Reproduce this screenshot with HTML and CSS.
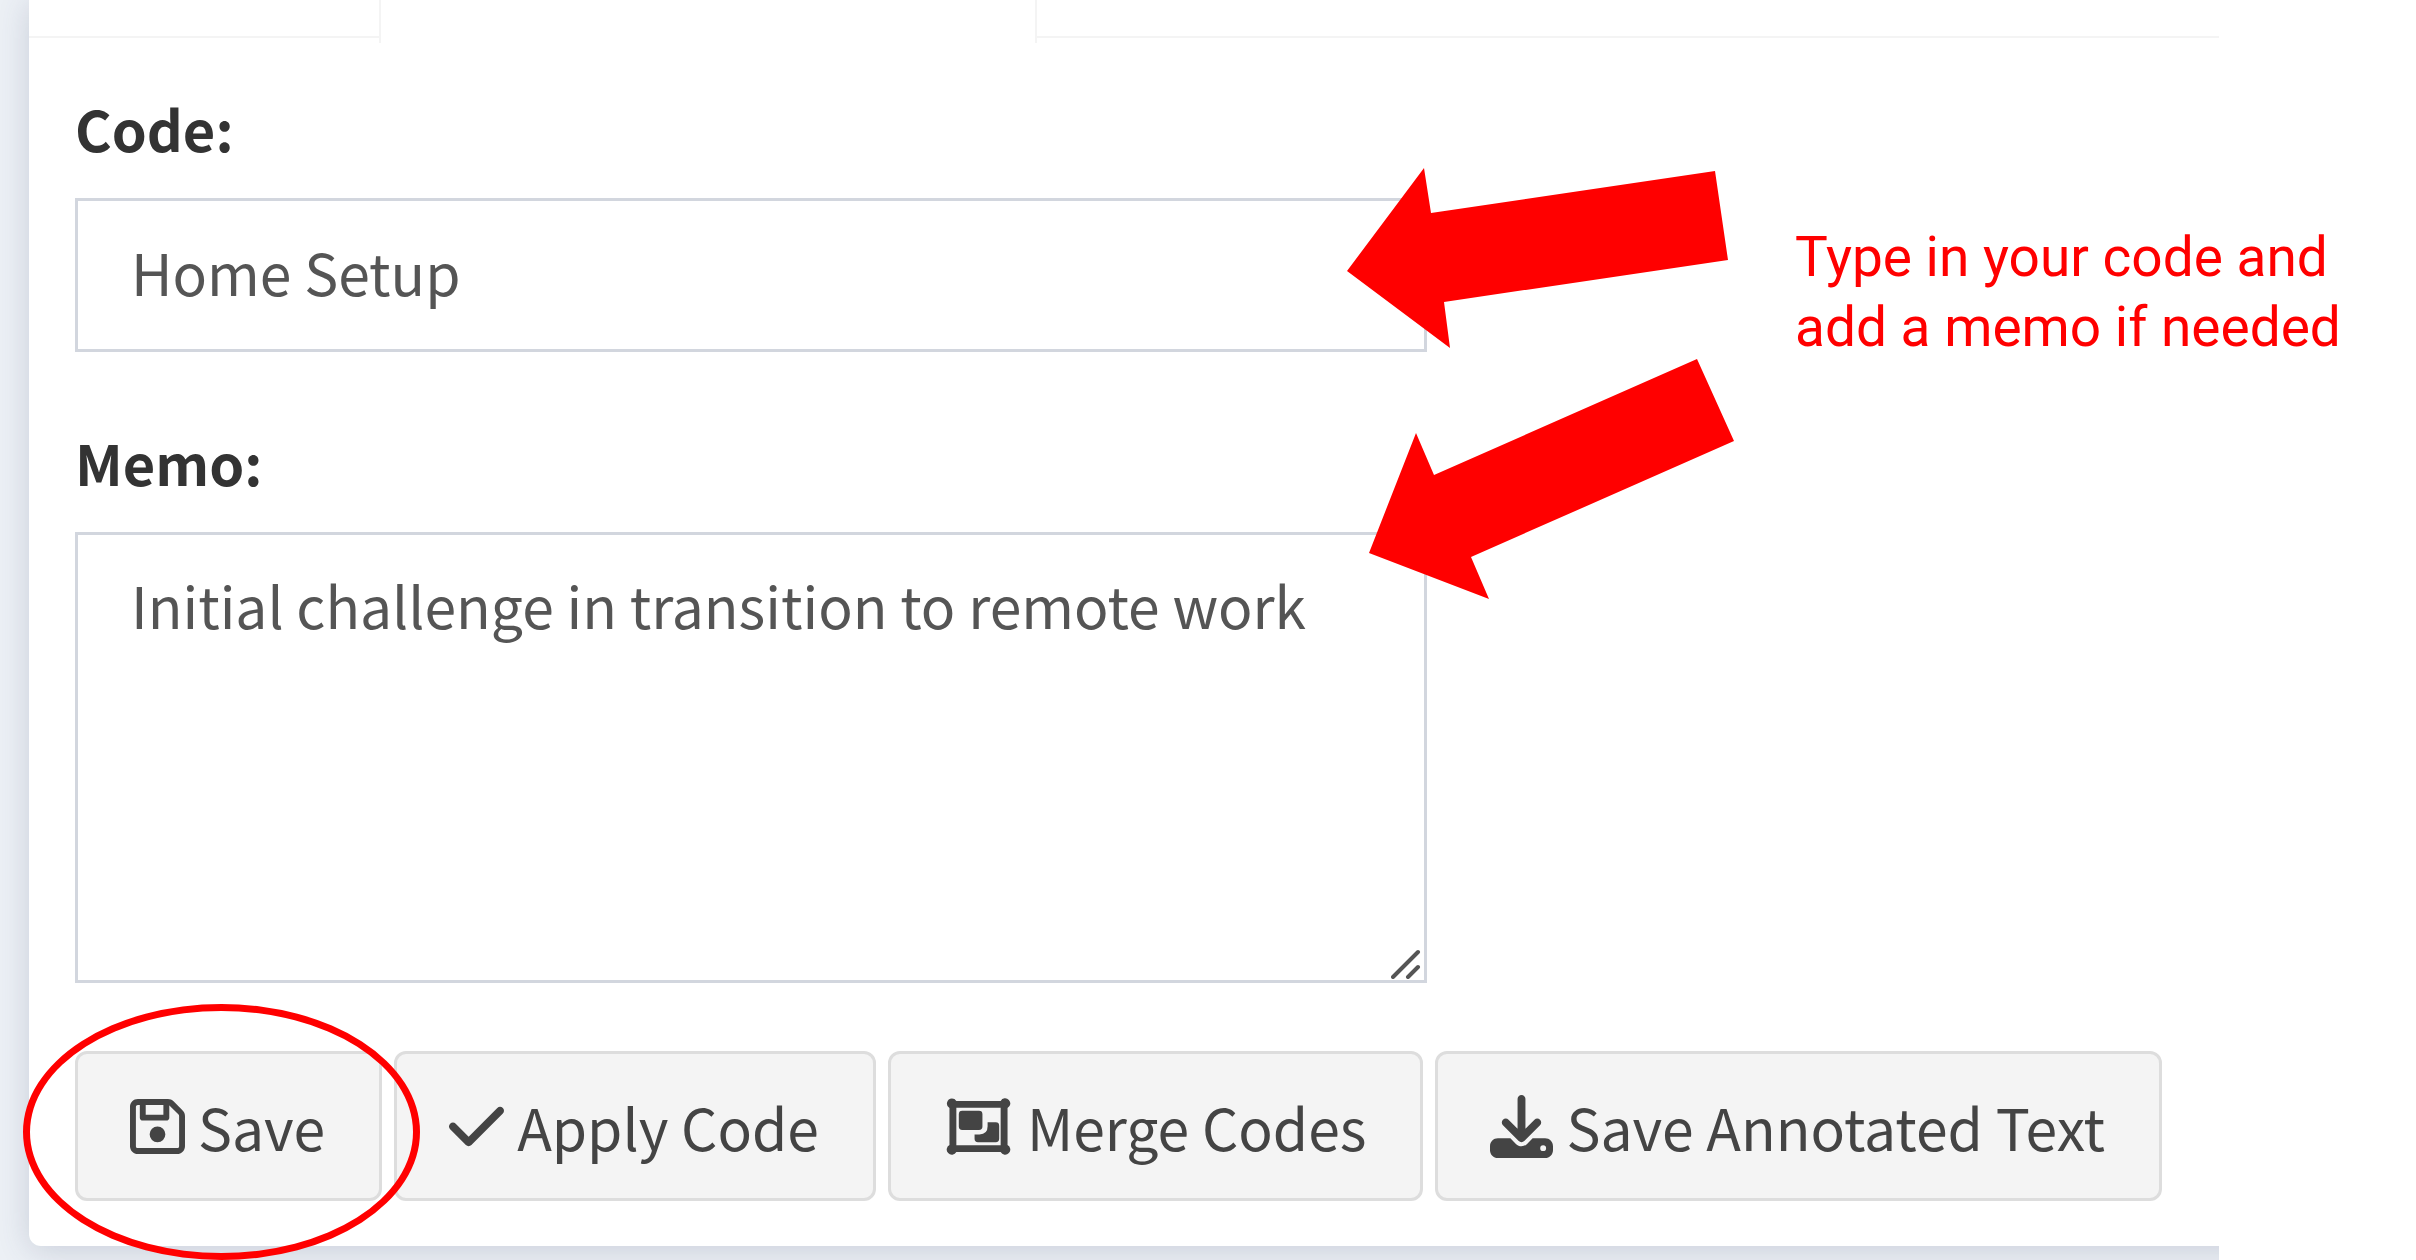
FILE: index.html
```html
<!DOCTYPE html>
<html lang="en">
<head>
<meta charset="utf-8">
<title>Code editor</title>
<link rel="stylesheet" href="styles.css">
</head>
<body>
<main class="app">
  <section class="card">
    <nav class="tabs" aria-label="Sections">
      <span class="tab"></span>
      <span class="tab tab-active"></span>
      <span class="tab"></span>
    </nav>
    <form class="form">
      <div class="fields">
        <div class="field">
          <label class="label" for="code">Code:</label>
          <input class="control" id="code" type="text" value="Home Setup">
        </div>
        <div class="field">
          <label class="label" for="memo">Memo:</label>
          <div class="memo">
            <textarea class="control control-area" id="memo" spellcheck="false">Initial challenge in transition to remote work</textarea>
            <svg class="grip" viewBox="0 0 30 30" aria-hidden="true"><path d="M2 28 27 3M17 28 27 18"/></svg>
          </div>
        </div>
      </div>
      <div class="actions">
        <button class="btn" type="button">
          <svg class="icon icon-narrow" viewBox="0 0 448 512" aria-hidden="true"><path d="M48 96V416c0 8.800 7.200 16 16 16H384c8.800 0 16-7.200 16-16V170.500c0-4.200-1.700-8.300-4.700-11.300l33.900-33.900c12 12 18.700 28.300 18.700 45.300V416c0 35.300-28.700 64-64 64H64c-35.300 0-64-28.700-64-64V96C0 60.700 28.700 32 64 32H309.500c17 0 33.300 6.700 45.300 18.700l74.500 74.500-33.900 33.900L320.800 84.700c-.3-.3-.5-.5-.8-.8V184c0 13.300-10.700 24-24 24H104c-13.300 0-24-10.700-24-24V80H64c-8.800 0-16 7.200-16 16zm80-16v80H272V80H128zm32 240a64 64 0 1 1 128 0 64 64 0 1 1-128 0z"/></svg>
          <span>Save</span>
        </button>
        <button class="btn" type="button">
          <svg class="icon icon-narrow" viewBox="0 0 448 512" aria-hidden="true"><path d="M438.600 105.400c12.500 12.500 12.500 32.800 0 45.300l-256 256c-12.500 12.500-32.800 12.500-45.300 0l-128-128c-12.500-12.500-12.500-32.800 0-45.300s32.800-12.500 45.300 0L160 338.700 393.400 105.400c12.500-12.500 32.800-12.500 45.300 0z"/></svg>
          <span>Apply Code</span>
        </button>
        <button class="btn" type="button">
          <svg class="icon icon-wide" viewBox="0 0 576 512" aria-hidden="true"><path fill-rule="evenodd" d="M72 28a42 42 0 0 1 36 20H468a42 42 0 1 1 56 58V406a42 42 0 1 1-56 58H108a42 42 0 1 1-56-58V106A42 42 0 0 1 72 28zM108 104V408H468V104z"/><path d="M156 128h136q28 0 28 28v100q0 28-28 28H156q-28 0-28-28V156q0-28 28-28zM368 222h60q28 0 28 28v106q0 28-28 28H284q-28 0-28-28v-36h40q66 0 66-66v-32z"/></svg>
          <span>Merge Codes</span>
        </button>
        <button class="btn" type="button">
          <svg class="icon" viewBox="0 0 512 512" aria-hidden="true"><path d="M288 32c0-17.700-14.300-32-32-32s-32 14.300-32 32V274.700l-73.400-73.400c-12.500-12.500-32.800-12.500-45.300 0s-12.500 32.800 0 45.300l128 128c12.500 12.500 32.800 12.500 45.300 0l128-128c12.500-12.500 12.500-32.800 0-45.300s-32.800-12.500-45.300 0L288 274.700V32zM64 352c-35.300 0-64 28.700-64 64v32c0 35.300 28.700 64 64 64H448c35.300 0 64-28.700 64-64V416c0-35.300-28.700-64-64-64H346.500l-45.300 45.300c-25 25-65.500 25-90.500 0L165.500 352H64zm368 56a24 24 0 1 1 0 48 24 24 0 1 1 0-48z"/></svg>
          <span>Save Annotated Text</span>
        </button>
      </div>
    </form>
  </section>
</main>
<p class="note">Type in your code and<br>add a memo if needed</p>
<svg class="arrow arrow-code" viewBox="0 0 382 182" aria-hidden="true"><path d="M77 1 84 46 368 4 381 93 97 135 103 181 0 104z"/></svg>
<svg class="arrow arrow-memo" viewBox="0 0 366 242" aria-hidden="true"><path d="M47 75 65 117 328 1 365 83 102 199 120 241 0 195z"/></svg>
<div class="ring"></div>
</body>
</html>
```
FILE: styles.css
```css
* {
  box-sizing: border-box;
}

body {
  margin: 0;
  position: relative;
  background: #fff;
  color: #333;
  font-family: "Noto Sans CJK SC", "Noto Sans", sans-serif;
  font-size: 57px;
  line-height: 80px;
}

.app {
  margin-right: 197px;
  padding: 0 0 14px 29px;
  background: #ecf0f5;
  overflow: hidden;
}

.card {
  margin-right: -40px;
  padding-right: 40px;
  background: #fff;
  border-radius: 0 0 12px 12px;
  box-shadow: 0 4px 32px rgba(60, 70, 110, 0.2);
}

.tabs {
  display: grid;
  grid-template-columns: 350px 658px 1fr;
  height: 43px;
}

.tab {
  height: 38px;
  border-bottom: 2px solid #f4f4f4;
}

.tab-active {
  height: 43px;
  border: solid #f4f4f4;
  border-width: 0 2px;
}

.form {
  display: flex;
  flex-direction: column;
  gap: 68px;
  padding: 45px 46px;
}

.fields {
  display: flex;
  flex-direction: column;
  gap: 70px;
}

.field {
  display: flex;
  flex-direction: column;
  gap: 30px;
  max-width: 1352px;
}

.label {
  font-size: 56px;
  font-weight: 700;
}

.control {
  display: block;
  width: 100%;
  height: 154px;
  margin: 0;
  padding: 0 53px 8px;
  border: 3px solid #d2d6de;
  border-radius: 0;
  outline: none;
  background: #fff;
  color: #555;
  font: inherit;
}

.memo {
  position: relative;
}

.control-area {
  height: 451px;
  padding: 29px 53px;
  resize: none;
}

.grip {
  position: absolute;
  right: 6px;
  bottom: 4px;
  width: 30px;
  height: 30px;
  fill: none;
  stroke: #555;
  stroke-width: 4;
  stroke-linecap: round;
}

.actions {
  display: flex;
  gap: 12px;
}

.btn {
  display: flex;
  align-items: center;
  gap: 13px;
  height: 150px;
  padding: 0 54px 0 52px;
  border: 3px solid #ddd;
  border-radius: 12px;
  background: #f4f4f4;
  color: #444;
  font: inherit;
  white-space: nowrap;
}

.icon {
  flex: none;
  width: 63px;
  height: 63px;
  fill: currentColor;
}

.icon-narrow {
  width: 55px;
}

.icon-wide {
  width: 71px;
}

.note {
  position: absolute;
  top: 222px;
  left: 1795px;
  margin: 0;
  color: #f00;
  font-family: Roboto, "Liberation Sans", sans-serif;
  font-size: 55px;
  line-height: 70px;
  white-space: nowrap;
}

.arrow {
  position: absolute;
  fill: #f00;
}

.arrow-code {
  top: 167px;
  left: 1347px;
  width: 382px;
}

.arrow-memo {
  top: 358px;
  left: 1369px;
  width: 366px;
}

.ring {
  position: absolute;
  top: 1004px;
  left: 23px;
  width: 397px;
  height: 256px;
  border: 7px solid #f00;
  border-radius: 50%;
  pointer-events: none;
}
```
